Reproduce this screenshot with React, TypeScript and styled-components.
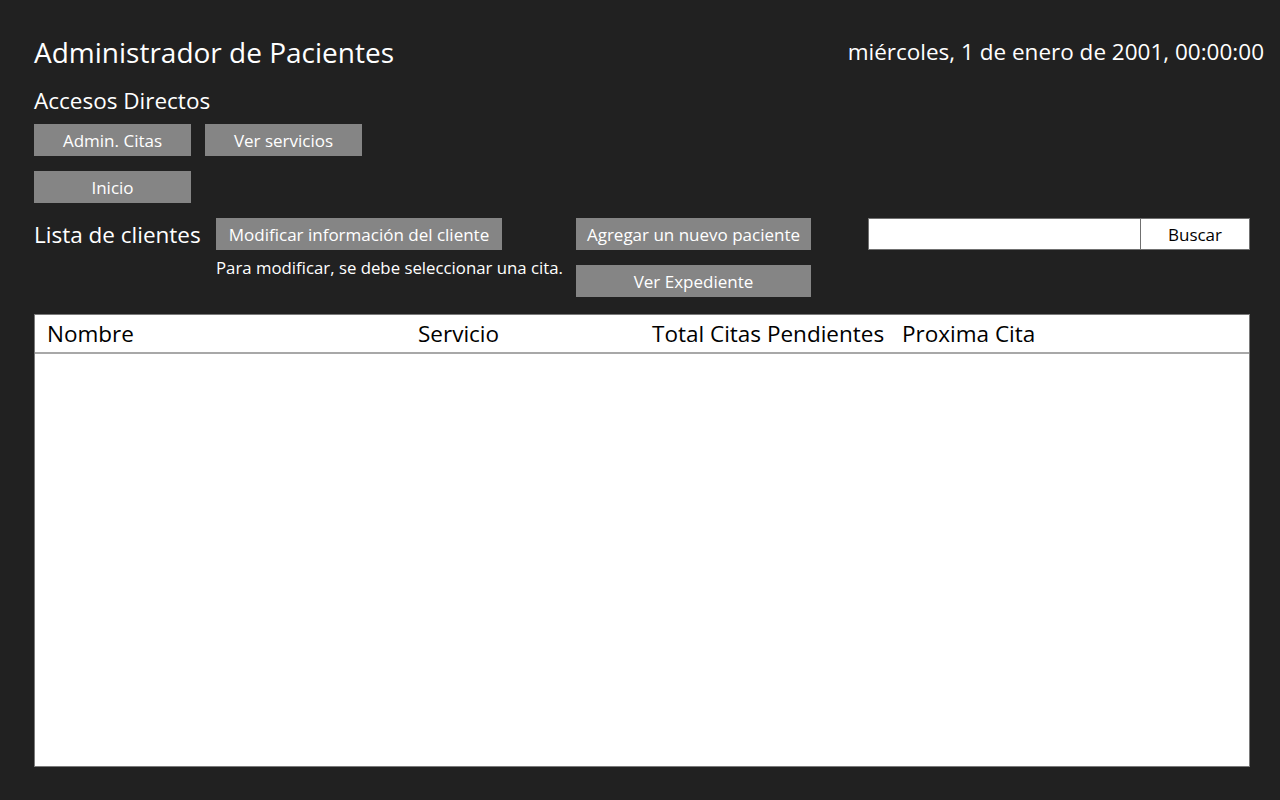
import styled, { createGlobalStyle } from "styled-components"

const GlobalStyle = createGlobalStyle`
  html, body {
    margin: 0;
    padding: 0;
    background: #212121;
  }
  body {
    font-family: "Open Sans", "Noto Sans", sans-serif;
    color: #ffffff;
  }
  * {
    box-sizing: border-box;
  }
`

const Page = styled.div`
  width: 1280px;
  height: 800px;
  background: #212121;
  padding-top: 34px;
  display: flex;
  flex-flow: column;
`

const Header = styled.div`
  display: flex;
  justify-content: space-between;
  align-items: center;
  padding: 0 16px 0 34px;
  height: 36px;
`

const Title = styled.h1`
  margin: 0;
  font-weight: 400;
  font-size: 28px;
  line-height: 36px;
`

const DateText = styled.div`
  font-size: 22.5px;
  line-height: 30px;
`

const Content = styled.div`
  padding: 0 30px 0 34px;
  display: flex;
  flex-flow: column;
`

const SectionTitle = styled.div`
  margin-top: 16px;
  font-size: 22.5px;
  line-height: 30px;
`

const Shortcuts = styled.div`
  margin-top: 8px;
  display: grid;
  grid-template-columns: 157px 157px;
  column-gap: 14px;
  row-gap: 15px;
  width: max-content;
`

const Button = styled.button<{ $width?: number }>`
  width: ${({ $width }) => ($width ? `${$width}px` : "100%")};
  height: 32px;
  border: none;
  background: #858585;
  color: #ffffff;
  font-family: "Open Sans", "Noto Sans", sans-serif;
  font-size: 17px;
  padding: 0;
  cursor: pointer;
`

const ClientsBar = styled.div`
  margin-top: 15px;
  display: flex;
  align-items: flex-start;
`

const ClientsLabel = styled.div`
  width: 182px;
  padding-top: 2px;
  font-size: 22.5px;
  line-height: 30px;
`

const Column = styled.div<{ $width: number }>`
  width: ${({ $width }) => $width}px;
  display: flex;
  flex-flow: column;
  align-items: flex-start;
  gap: 15px;
`

const Hint = styled.div`
  margin-top: -8px;
  font-size: 16.8px;
  line-height: 22px;
  white-space: nowrap;
`

const SearchGroup = styled.div`
  margin-left: auto;
  display: flex;
`

const SearchInput = styled.input`
  width: 273px;
  height: 32px;
  border: 1px solid #707070;
  background: #ffffff;
  outline: none;
  padding: 0 8px;
`

const SearchButton = styled.button`
  width: 110px;
  height: 32px;
  margin-left: -1px;
  border: 1px solid #707070;
  background: #ffffff;
  color: #000000;
  font-family: "Open Sans", "Noto Sans", sans-serif;
  font-size: 17px;
  padding: 0;
`

const Table = styled.div`
  margin-top: 17px;
  height: 453px;
  background: #ffffff;
  border: 1px solid #7a7a7a;
  display: flex;
  flex-flow: column;
`

const TableHead = styled.div`
  height: 39px;
  padding-left: 12px;
  display: grid;
  grid-template-columns: 371px 234px 250px 1fr;
  align-items: center;
  border-bottom: 2px solid #a8a8a8;
  color: #000000;
  font-size: 22.5px;
`

const TableBody = styled.div`
  flex: 1;
`

const columns = ["Nombre", "Servicio", "Total Citas Pendientes", "Proxima Cita"]

export default function App() {
  return (
    <Page>
      <GlobalStyle />
      <Header>
        <Title>Administrador de Pacientes</Title>
        <DateText>miércoles, 1 de enero de 2001, 00:00:00</DateText>
      </Header>
      <Content>
        <SectionTitle>Accesos Directos</SectionTitle>
        <Shortcuts>
          <Button>Admin. Citas</Button>
          <Button>Ver servicios</Button>
          <Button>Inicio</Button>
        </Shortcuts>
        <ClientsBar>
          <ClientsLabel>Lista de clientes</ClientsLabel>
          <Column $width={360}>
            <Button $width={286}>Modificar información del cliente</Button>
            <Hint>Para modificar, se debe seleccionar una cita.</Hint>
          </Column>
          <Column $width={235}>
            <Button>Agregar un nuevo paciente</Button>
            <Button>Ver Expediente</Button>
          </Column>
          <SearchGroup>
            <SearchInput type="text" />
            <SearchButton>Buscar</SearchButton>
          </SearchGroup>
        </ClientsBar>
        <Table>
          <TableHead>
            {columns.map((c) => (
              <div key={c}>{c}</div>
            ))}
          </TableHead>
          <TableBody />
        </Table>
      </Content>
    </Page>
  )
}
